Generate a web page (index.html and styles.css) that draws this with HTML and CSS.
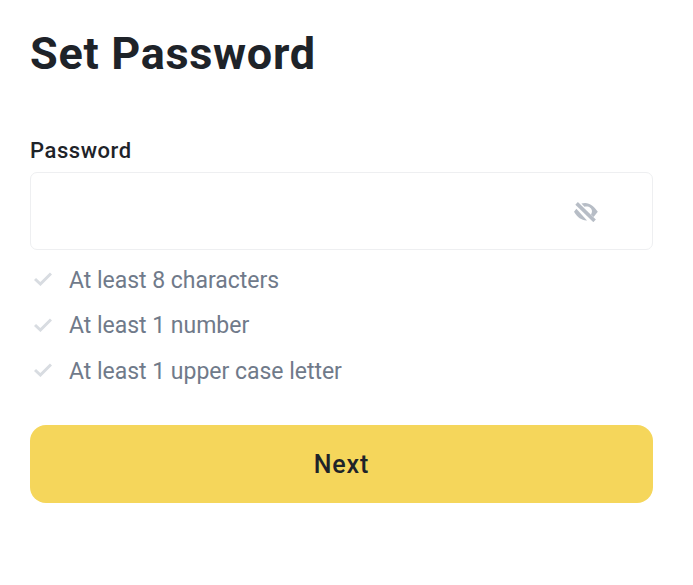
FILE: index.html
```html
<!DOCTYPE html>
<html lang="en">
<head>
  <meta charset="UTF-8" />
  <meta name="viewport" content="width=device-width, initial-scale=1.0"/>
  <title>Set Password</title>
  <link rel="stylesheet" href="styles.css">
</head>
<body>
  <form class="container">
    <h1>Set Password</h1>

    <label for="password">Password</label>
    <div class="input-group">
      <input type="password" id="password" />
      <button type="button" class="toggle" aria-label="Show password">
        <svg width="24" height="20" viewBox="0 0 24 20">
          <path d="M7.4 1.6 C14 -0.6 19.5 3.2 23.8 9.8 L19.6 15 L17 12.4 C20 7.5 15.5 3.2 10.5 4.7 Z" fill="#b7bdc6"/>
          <path d="M2.6 1.4 L20.6 18.9" fill="none" stroke="#b7bdc6" stroke-width="3.6"/>
          <path d="M2.4 6.8 L0 9.8 C3.6 15.6 7.8 18.7 13 18.4 Z" fill="#b7bdc6"/>
        </svg>
      </button>
    </div>

    <ul class="rules">
      <li>
        <svg class="check" width="18" height="14" viewBox="0 0 18 14"><path d="M1 7 L6.4 12 L17 1.5"/></svg>
        <span>At least 8 characters</span>
      </li>
      <li>
        <svg class="check" width="18" height="14" viewBox="0 0 18 14"><path d="M1 7 L6.4 12 L17 1.5"/></svg>
        <span>At least 1 number</span>
      </li>
      <li>
        <svg class="check" width="18" height="14" viewBox="0 0 18 14"><path d="M1 7 L6.4 12 L17 1.5"/></svg>
        <span>At least 1 upper case letter</span>
      </li>
    </ul>

    <button type="submit" class="next">Next</button>
  </form>
</body>
</html>
```

FILE: styles.css
```css
* {
  box-sizing: border-box;
}

body {
  font-family: Roboto, "Liberation Sans", sans-serif;
  background: #fff;
  color: #1e2329;
  margin: 0;
}

.container {
  display: flex;
  flex-direction: column;
  padding: 24px 40px 0 30px;
}

h1 {
  margin: 0 0 53px;
  font-size: 45px;
  font-weight: 700;
  line-height: 60px;
  letter-spacing: 0.7px;
}

label {
  font-size: 22px;
  font-weight: 500;
  line-height: 28px;
  letter-spacing: 0.55px;
  margin-bottom: 7px;
}

.input-group {
  display: flex;
  align-items: center;
  height: 78px;
  padding: 1px 54px 0 16px;
  border: 1px solid #eeeff1;
  border-radius: 7px;
}

input {
  flex: 1;
  font-size: 24px;
  border: none;
  outline: none;
  background: transparent;
}

.toggle {
  display: flex;
  padding: 0;
  border: none;
  background: none;
  cursor: pointer;
}

.rules {
  list-style: none;
  margin: 7.5px 0 0;
  padding: 0;
}

.rules li {
  display: flex;
  align-items: center;
  gap: 17px;
  height: 45.5px;
  padding-left: 4px;
  font-size: 23px;
  letter-spacing: -0.02px;
  color: #707a8a;
}

.check {
  margin-bottom: 2px;
}

.check path {
  fill: none;
  stroke: #d8dce1;
  stroke-width: 3;
}

.next {
  height: 78px;
  margin-top: 31px;
  border: none;
  border-radius: 16px;
  background: #f5d65b;
  color: #1e2329;
  font-family: inherit;
  font-size: 25px;
  font-weight: 500;
  letter-spacing: 0.9px;
  cursor: pointer;
}
```
